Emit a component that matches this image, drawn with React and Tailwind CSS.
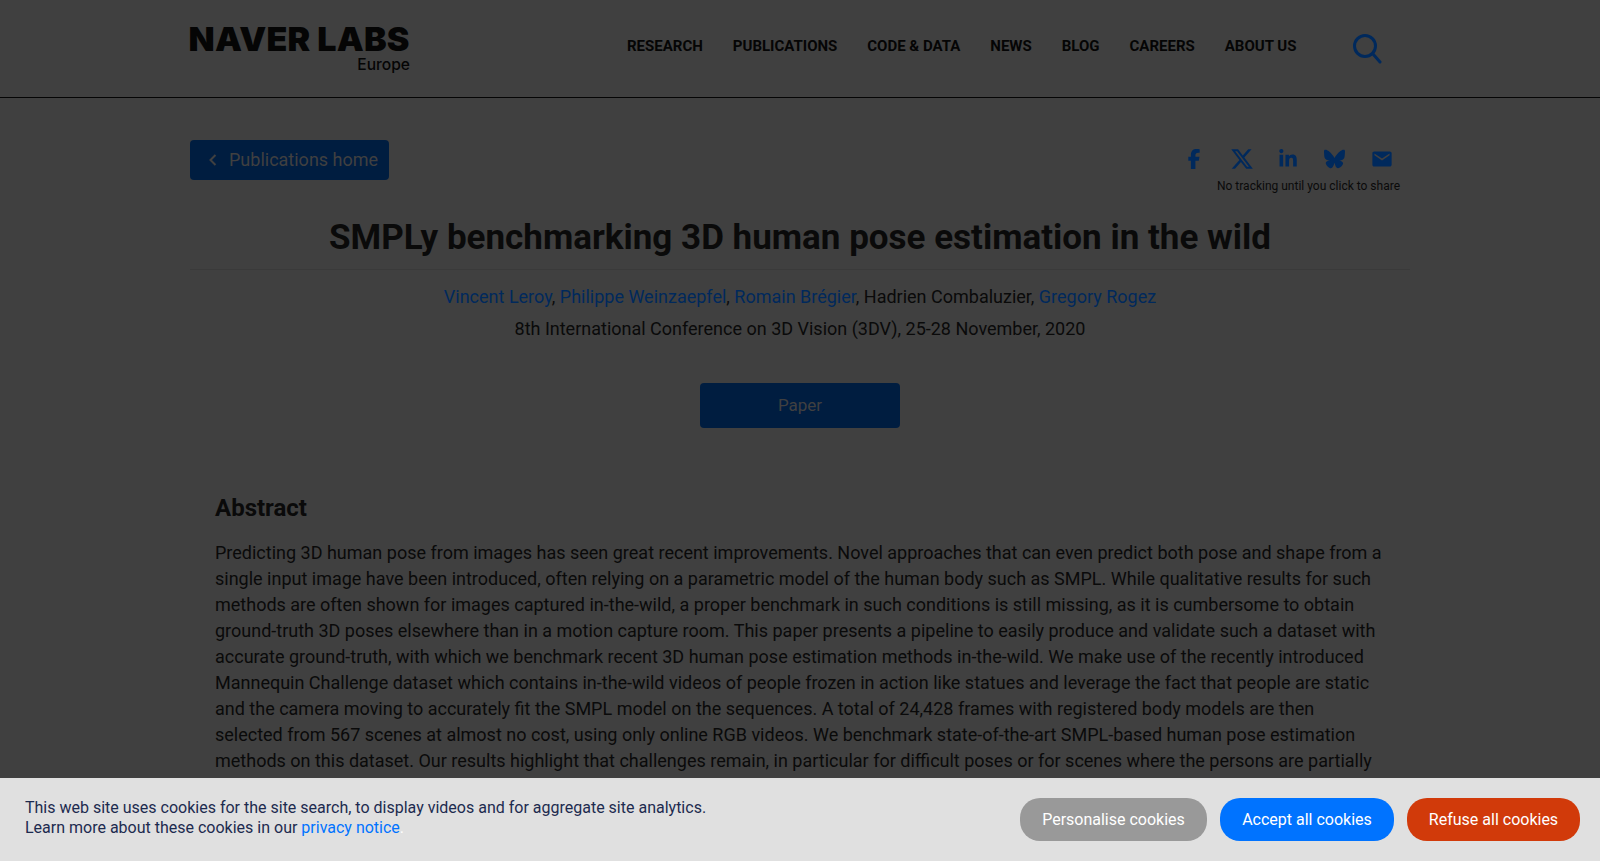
import React from "react";
import { FaFacebookF, FaXTwitter, FaLinkedinIn, FaBluesky } from "react-icons/fa6";
import { IoMdMail } from "react-icons/io";

const navItems = ["RESEARCH", "PUBLICATIONS", "CODE & DATA", "NEWS", "BLOG", "CAREERS", "ABOUT US"];

const abstractText =
  "Predicting 3D human pose from images has seen great recent improvements. Novel approaches that can even predict both pose and shape from a single input image have been introduced, often relying on a parametric model of the human body such as SMPL. While qualitative results for such methods are often shown for images captured in-the-wild, a proper benchmark in such conditions is still missing, as it is cumbersome to obtain ground-truth 3D poses elsewhere than in a motion capture room. This paper presents a pipeline to easily produce and validate such a dataset with accurate ground-truth, with which we benchmark recent 3D human pose estimation methods in-the-wild. We make use of the recently introduced Mannequin Challenge dataset which contains in-the-wild videos of people frozen in action like statues and leverage the fact that people are static and the camera moving to accurately fit the SMPL model on the sequences. A total of 24,428 frames with registered body models are then selected from 567 scenes at almost no cost, using only online RGB videos. We benchmark state-of-the-art SMPL-based human pose estimation methods on this dataset. Our results highlight that challenges remain, in particular for difficult poses or for scenes where the persons are partially truncated or occluded.";

const Header = () => {
  return (
    <header className="h-[98px] border-b border-[#050505]">
      <div className="w-[1220px] mx-auto flex">
        <div className="w-[220px] pt-[22px] flex flex-col items-end">
          <div className="font-['Inter'] font-black text-[33px] leading-[34px] tracking-[0.2px] text-[#050505] whitespace-nowrap scale-x-[1.03] origin-right">
            NAVER LABS
          </div>
          <div className="font-['Inter'] font-medium text-[15.6px] leading-[18px] text-[#050505]">Europe</div>
        </div>
        <nav className="ml-[217px] pt-[36px] flex gap-[30px] text-[15px] leading-[20px] font-bold text-[#050505]">
          {navItems.map((item) => (
            <a key={item}>{item}</a>
          ))}
        </nav>
        <svg className="ml-[56px] mt-[33px]" width="30" height="32" viewBox="0 0 30 32" fill="none" stroke="#00295c" strokeWidth="3" strokeLinecap="round">
          <circle cx="13" cy="13" r="10.5" />
          <path d="M21 21 L28 29" />
        </svg>
      </div>
    </header>
  );
};

const ShareBar = () => {
  return (
    <div className="flex flex-col items-end w-[200px] mr-[10px]">
      <div className="flex items-center text-[#00295c] h-[36px] pr-[7px] mt-[1px]">
        <FaFacebookF className="w-[20px] h-[20px] mr-[26px]" />
        <FaXTwitter className="w-[24px] h-[24px] mr-[24px]" />
        <FaLinkedinIn className="w-[20px] h-[20px] mr-[26px]" />
        <FaBluesky className="w-[21px] h-[20px] mr-[26px]" />
        <IoMdMail className="w-[22px] h-[22px]" />
      </div>
      <div className="text-[12px] leading-[16px] mt-[1px] whitespace-nowrap text-[#0a0a0a]">No tracking until you click to share</div>
    </div>
  );
};

export default function App() {
  return (
    <div className="relative h-[861px] overflow-hidden bg-[#404040] text-[#0a0a0a] font-['Roboto',sans-serif]">
      <Header />
      <main className="w-[1220px] mx-auto">
        <div className="flex justify-between pt-[42px]">
          <a className="flex items-center w-[199px] h-[40px] pb-[1px] bg-[#001d40] rounded-[4px] text-[#404040] text-[18px] pl-[18px]">
            <svg className="mr-[11px]" width="10" height="14" viewBox="0 0 10 14" fill="none" stroke="#404040" strokeWidth="2">
              <path d="M7.5 2 L2.5 7 L7.5 12" />
            </svg>
            Publications home
          </a>
          <ShareBar />
        </div>
        <h1 className="mt-[22px] text-center text-[35px] leading-[44px] font-bold pb-[9px] border-b border-[#3a3a3a]">
          SMPLy benchmarking 3D human pose estimation in the wild
        </h1>
        <div className="text-center text-[18px] leading-[32px] mt-[11px]">
          <div>
            <a className="text-[#00295c]">Vincent Leroy</a>, <a className="text-[#00295c]">Philippe Weinzaepfel</a>,{" "}
            <a className="text-[#00295c]">Romain Brégier</a>, Hadrien Combaluzier, <a className="text-[#00295c]">Gregory Rogez</a>
          </div>
          <div>8th International Conference on 3D Vision (3DV), 25-28 November, 2020</div>
        </div>
        <div className="flex justify-center mt-[38px]">
          <a className="flex items-center justify-center w-[200px] h-[45px] bg-[#001d40] rounded-[4px] text-[#404040] text-[17px]">Paper</a>
        </div>
        <section className="px-[25px] mt-[64px]">
          <h2 className="text-[24px] leading-[32px] font-bold">Abstract</h2>
          <p className="mt-[16px] text-[18px] leading-[26px]">{abstractText}</p>
        </section>
      </main>
      <div className="absolute left-0 right-0 bottom-0 h-[83px] bg-[#e0e0e0] flex items-center justify-between pl-[25px] pr-[20px]">
        <div className="text-[16px] leading-[20px] text-[#1d2b4f] -mt-[3px]">
          <div>This web site uses cookies for the site search, to display videos and for aggregate site analytics.</div>
          <div>
            Learn more about these cookies in our <a className="text-[#0073ff]">privacy notice</a>
            <span className="text-[#ffffff]">.</span>
          </div>
        </div>
        <div className="flex gap-[13px] text-[16px] text-white">
          <button className="w-[187px] h-[43px] rounded-[20px] bg-[#999999]">Personalise cookies</button>
          <button className="w-[174px] h-[43px] rounded-[20px] bg-[#0073ff]">Accept all cookies</button>
          <button className="w-[173px] h-[43px] rounded-[20px] bg-[#d13a0a]">Refuse all cookies</button>
        </div>
      </div>
    </div>
  );
}
